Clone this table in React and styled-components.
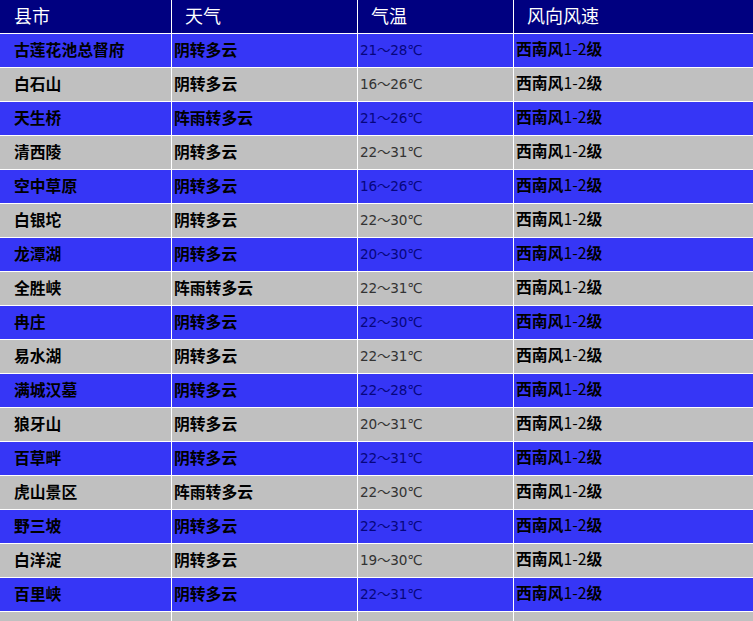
import React from "react";
import styled, { createGlobalStyle } from "styled-components";

const GlobalStyle = createGlobalStyle`
  html, body {
    margin: 0;
    padding: 0;
    background: #ffffff;
    overflow: hidden;
  }
`;

const Table = styled.div`
  display: grid;
  grid-template-columns: 171px 185px 155px 240px;
  grid-auto-rows: 33px;
  gap: 1px;
  background: #ffffff;
  width: 754px;
  font-family: "Noto Sans CJK SC", sans-serif;
`;

const HeadCell = styled.div`
  background: #000080;
  color: #ffffff;
  font-size: 18px;
  font-weight: 400;
  display: flex;
  align-items: center;
  padding: 0 0 3px ${(p) => p.$pad}px;
`;

const Cell = styled.div`
  background: ${(p) => (p.$odd ? "#3636f6" : "#c0c0c0")};
  display: flex;
  align-items: center;
  padding: 0 0 3px ${(p) => p.$pad}px;
  font-size: 15.8px;
  font-weight: 700;
  color: #000000;
  white-space: nowrap;
`;

const TempCell = styled(Cell)`
  font-family: "DejaVu Sans", "Noto Sans CJK SC", sans-serif;
  font-size: 13.6px;
  font-weight: 400;
  letter-spacing: -0.2px;
  color: ${(p) => (p.$odd ? "#06067e" : "#333333")};
`;

const Wind = styled.span`
  line-height: 1;
`;

const Num = styled.span`
  font-weight: 400;
`;

const rows = [
  ["古莲花池总督府", "阴转多云", "21～28℃"],
  ["白石山", "阴转多云", "16～26℃"],
  ["天生桥", "阵雨转多云", "21～26℃"],
  ["清西陵", "阴转多云", "22～31℃"],
  ["空中草原", "阴转多云", "16～26℃"],
  ["白银坨", "阴转多云", "22～30℃"],
  ["龙潭湖", "阴转多云", "20～30℃"],
  ["全胜峡", "阵雨转多云", "22～31℃"],
  ["冉庄", "阴转多云", "22～30℃"],
  ["易水湖", "阴转多云", "22～31℃"],
  ["满城汉墓", "阴转多云", "22～28℃"],
  ["狼牙山", "阴转多云", "20～31℃"],
  ["百草畔", "阴转多云", "22～31℃"],
  ["虎山景区", "阵雨转多云", "22～30℃"],
  ["野三坡", "阴转多云", "22～31℃"],
  ["白洋淀", "阴转多云", "19～30℃"],
  ["百里峡", "阴转多云", "22～31℃"],
  ["", "", ""],
];

export default function App() {
  return (
    <>
      <GlobalStyle />
      <Table>
        <HeadCell $pad={14}>县市</HeadCell>
        <HeadCell $pad={13}>天气</HeadCell>
        <HeadCell $pad={13}>气温</HeadCell>
        <HeadCell $pad={13}>风向风速</HeadCell>
        {rows.map((r, i) => {
          const odd = i % 2 === 0;
          return (
            <React.Fragment key={i}>
              <Cell $odd={odd} $pad={14}>{r[0]}</Cell>
              <Cell $odd={odd} $pad={2}>{r[1]}</Cell>
              <TempCell $odd={odd} $pad={2}>{r[2]}</TempCell>
              <Cell $odd={odd} $pad={2}>
                {r[0] && (
                  <Wind>
                    西南风<Num>1-2</Num>级
                  </Wind>
                )}
              </Cell>
            </React.Fragment>
          );
        })}
      </Table>
    </>
  );
}
